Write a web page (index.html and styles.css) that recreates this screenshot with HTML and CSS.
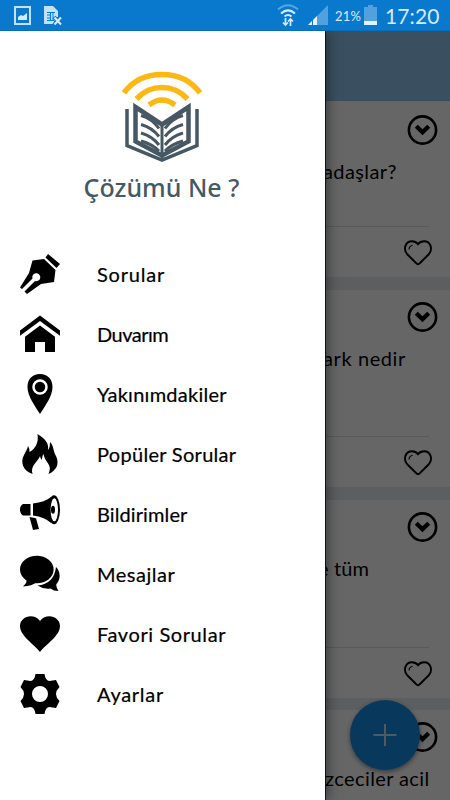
FILE: index.html
```html
<!DOCTYPE html>
<html lang="tr">
<head>
<meta charset="utf-8">
<meta name="viewport" content="width=device-width">
<title>Çözümü Ne ?</title>
<link rel="stylesheet" href="styles.css">
</head>
<body>
<svg width="0" height="0" class="defs">
  <symbol id="more" viewBox="0 0 30 30"><circle cx="15" cy="15" r="13.600" fill="none" stroke="#000" stroke-width="2.600"/><path d="M7.300 12.700 10.300 9.700 15 14.300 19.700 9.700l3 3-7.700 7.600z"/></symbol>
  <symbol id="like" viewBox="0 0 28 26"><path d="M14 24.2Q13.2 24.2 12 23L3 14C-.8 9.500 1 1.200 8 1.200c3 0 4.500 1 6 2.900 1.500-1.900 3-2.900 6-2.900 7 0 8.800 8.300 5 12.800l-9 9q-1.200 1.200-2 1.200z" fill="none" stroke="#000" stroke-width="1.900"/><path d="M5 9.500Q5 6 8.600 5.200" fill="none" stroke="#000" stroke-width="1.100"/></symbol>
</svg>
<header class="status">
  <svg class="picture" width="17" height="19" viewBox="0 0 17 19"><path d="M1 1h15v17H1z" fill="none" stroke="#c4e0f7" stroke-width="2"/><path d="M4 14V11l3-2 2 1 4-3v7z" fill="#d6ebfb"/></svg>
  <svg class="sim" width="18" height="20" viewBox="0 0 18 20"><path d="M0 0h9l5 5v6h-3V6H3v9h7v3H0z" fill="#c4e0f7"/><path d="M3 6h8v9H3z" fill="#c4e0f7"/><path d="M3 6.500h8M3 9h3M3 12h3M3 14.500h7M6.500 6v9M9 6v9" stroke="#0879cd" fill="none"/><path d="m10 11 7 8m0-8-7 8" stroke="#0879cd" stroke-width="4"/><path d="m10.500 11.500 6.500 7m0-7-6.500 7" stroke="#d6ebfb" stroke-width="2"/></svg>
  <svg class="wifi" width="22" height="23" viewBox="0 0 22 23"><g fill="none" stroke-width="2"><path d="M1 5.500Q11-3 21 5.500" stroke="#58a6df"/><path d="M4 9.500Q11 3.300 18 9.500M7.500 12.500q3.500-3 7 0" stroke="#d6ebfb"/><path d="M8.500 14v7M6 18.500 8.500 21 11 18.500M13.500 22v-7M11 17.500l2.500-2.500 2.500 2.500" stroke="#d6ebfb" stroke-width="1.700"/></g></svg>
  <svg class="signal" width="20" height="20" viewBox="0 0 20 20"><path d="M0 20 20 0v20z" fill="#50a1dd"/><path d="M0 20 9 11v9z" fill="#e3f2fd"/><path d="M4.500 14v6" stroke="#0879cd"/></svg>
  <span class="percent">21%</span>
  <svg class="battery" width="13" height="20" viewBox="0 0 13 20"><path d="M0 2h4V0h5v2h4v18H0z" fill="#50a1dd"/><path d="M0 16h13v4H0z" fill="#e3f2fd"/></svg>
  <span class="clock">17:20</span>
</header>
<main class="stage">
  <section class="feed">
    <div class="toolbar"></div>
    <article class="card first">
      <svg class="more"><use href="#more"/></svg>
      <p class="question q1">adaşlar?</p>
      <footer><svg class="like"><use href="#like"/></svg></footer>
    </article>
    <article class="card">
      <svg class="more"><use href="#more"/></svg>
      <p class="question q2">ark nedir</p>
      <footer><svg class="like"><use href="#like"/></svg></footer>
    </article>
    <article class="card third">
      <svg class="more"><use href="#more"/></svg>
      <p class="question q3">e tüm</p>
      <footer><svg class="like"><use href="#like"/></svg></footer>
    </article>
    <article class="card">
      <svg class="more"><use href="#more"/></svg>
      <p class="question q4">zceciler acil</p>
    </article>
    <div class="fab"><svg width="24" height="24" viewBox="0 0 24 24"><path d="M12 1v22M.5 12h23" stroke-width="2"/></svg></div>
  </section>
  <div class="scrim"></div>
  <nav class="drawer">
    <div class="brand">
      <svg width="80" height="93" viewBox="0 0 80 93">
        <g fill="none" stroke="#fdb813" stroke-width="5.500"><path d="M2 22C12 8 25 3.500 40 3.500S68 8 78 22"/><path d="M14.500 28C22 20 29 16.500 40 16.500S58 20 65.500 28"/><path d="M27 34q13-10 26 0"/></g>
        <g fill="none" stroke="#475863"><path d="M5 38v36.500L40 89 75 74.500V38" stroke-width="3.500"/><path d="M13.500 36v34.500L40 84.500 66.500 70.500V36L40 53.500z" stroke-width="4.500"/><path d="M40 53v34" stroke-width="3"/><path d="M19 44.500q11 3 18 13M19 53.500q11 3 18 12M19 62q11 3 18 12M19 70q11 3 18 10M61 44.500q-11 3-18 13M61 53.500q-11 3-18 12M61 62q-11 3-18 12M61 70q-11 3-18 10" stroke-width="3"/></g>
      </svg>
      <h1>Çözümü Ne ?</h1>
    </div>
    <ul class="menu">
      <li><svg viewBox="0 0 40 40"><path d="m28 0 12 10-3.500 4L25.500 3.500z"/><path d="M12.500 6.500 24 5l11.500 11-1.500 12-13 2L7 40l-2.500-2.500L15 27a4 4 0 1 0-2.500-2.500L2 35l-2-1.500L9 19z"/></svg><span class="t1">Sorular</span></li>
      <li><svg viewBox="0 0 40 40"><path d="M20 1.500 40 16.500v5.300L20 7 0 21.800v-5.300z"/><path d="m20 11.500 15 11.300V38H25V28H15v10H5V22.800z"/></svg><span class="t2">Duvarım</span></li>
      <li><svg viewBox="0 0 40 40"><path d="M20 0C12 0 7.500 5.500 7.500 13 7.500 22 15 32 20 40c5-8 12.500-18 12.500-27C32.500 5.500 28 0 20 0z"/><circle cx="20" cy="13" r="6.500" fill="none" stroke="#fff" stroke-width="2.500"/></svg><span class="t3">Yakınımdakiler</span></li>
      <li><svg viewBox="0 0 40 40"><path d="M17.500 0C26 5 29 10 28 16q2-2 2-8c4 4 3 9 6 14 4 8 0 15-7.500 18 4.500-10-3-10-5-20-1 1-1.500 4-1.500 6q-2-2-2-4c-2 6-10 9-7.500 18C3 37 0 28 4 21c2-4 3-5 4-9q2 3 1.500 6C15 15 19 9 17.500 0z"/></svg><span class="t4">Popüler Sorular</span></li>
      <li><svg viewBox="0 0 40 40"><path d="M3 10h7.500v11.500H3q-3-2-3-6t3-5.500zM13 9.500Q25 8 31 3v26Q25 23 13 21.500zM9.500 23l6.500 1.300 3 10.700-6 1z"/><ellipse cx="34" cy="15.800" rx="6" ry="14.500"/><ellipse cx="34.300" cy="15.800" rx="3.700" ry="11.500" fill="#fff"/><ellipse cx="33" cy="15.800" rx="2" ry="4"/></svg><span class="t5">Bildirimler</span></li>
      <li><svg viewBox="0 0 40 40"><path d="M36 13c4 4 5.500 11 .5 17q-1 2 2 7-5 0-8-2.500-7 1-13-3Q34 30 36 13z"/><ellipse cx="16.800" cy="15.500" rx="16.800" ry="13.700"/><path d="m6 25 11 3q-5 4-14 4.500Q8 28 6 25z"/></svg><span class="t6">Mesajlar</span></li>
      <li><svg viewBox="0 0 40 40"><path d="M20 38C14 30 0 22 0 12 0 3 13-2 20 7c7-9 20-4 20 5 0 10-14 18-20 26z"/></svg><span class="t7">Favori Sorular</span></li>
      <li><svg viewBox="0 0 40 40"><path fill-rule="evenodd" d="M15.500 0h9q1 7 5 7l6.500-1 3.500 7q-7 7 0 14L36 34l-6.500-1q-4 0-5 7h-9q-1-7-5-7L4 34 .5 27q7-7 0-14L4 6l6.500 1q4 0 5-7zM20 12a8 8 0 1 0 0 16 8 8 0 0 0 0-16z"/></svg><span class="t8">Ayarlar</span></li>
    </ul>
  </nav>
</main>
</body>
</html>
```

FILE: styles.css
```css
* { box-sizing: border-box; }
body {
  margin: 0;
  height: 800px;
  display: flex;
  flex-direction: column;
  overflow: hidden;
  font-family: Lato, "Open Sans", sans-serif;
  color: #000;
}
svg { display: block; flex: none; }
.defs { position: absolute; }
.status {
  height: 31px;
  flex: none;
  display: flex;
  align-items: flex-start;
  padding: 0 10px 0 14px;
  background: #0879cd;
  border-bottom: 1px solid #066ebd;
  color: #d6ebfb;
  white-space: nowrap;
}
.picture { margin-top: 6px; }
.sim { margin: 6px 0 0 13px; }
.wifi { margin: 4px 0 0 215px; }
.signal { margin: 5px 0 0 9px; }
.percent { width: 26px; margin: 8px 0 0 7px; font-size: 13px; line-height: 16px; letter-spacing: .2px; }
.battery { margin: 5px 0 0 3px; }
.clock { margin: 3px 0 0 8px; font-size: 21px; line-height: 25px; letter-spacing: .1px; }
.stage { position: relative; flex: 1; overflow: hidden; }
.feed {
  height: 100%;
  display: flex;
  flex-direction: column;
  background: #e5ecf1;
}
.toolbar { height: 70px; flex: none; background: #92c9f0; border-bottom: 1px solid #8fc2e8; }
.card {
  height: 197px;
  flex: none;
  margin-bottom: 13px;
  padding: 12px 12px 0 20px;
  display: flex;
  flex-direction: column;
  background: #fff;
}
.card.first { height: 176px; padding-top: 14px; }
.card.third { height: 198px; margin-bottom: 12px; }
.more { width: 31px; height: 30px; align-self: flex-end; }
.question { margin: 13px 0 0 303px; font-size: 20px; line-height: 26px; white-space: nowrap; }
.q1 { letter-spacing: .4px; }
.q2 { letter-spacing: .6px; }
.q3 { margin-left: 298px; letter-spacing: .1px; }
.q4 { margin-left: 305px; letter-spacing: .4px; }
.card footer {
  height: 51px;
  margin: auto 9px 0 0;
  padding: 13px 0 0;
  border-top: 1px solid #d9e0e4;
}
.like { width: 28px; height: 26px; margin: 0 -3px 0 auto; }
.fab {
  position: absolute;
  left: 350px;
  top: 669px;
  width: 70px;
  height: 70px;
  border-radius: 50%;
  display: grid;
  place-items: center;
  background: #1590e8;
  box-shadow: 0 2px 5px rgba(0, 0, 0, .45);
}
.fab path { stroke: #fff; opacity: .75; }
.scrim { position: absolute; inset: 0; background: rgba(0, 0, 0, .6); }
.drawer {
  position: absolute;
  top: 0;
  bottom: 0;
  left: 0;
  width: 325px;
  background: #fff;
  box-shadow: 1px 0 0 #0c1318, 2px 0 12px rgba(0, 0, 0, .5);
}
.brand { height: 213px; padding: 40px 2px 0 0; display: flex; flex-direction: column; align-items: center; }
.brand h1 {
  margin: 7px 0 0;
  font: 500 25px/32px "Noto Sans", sans-serif;
  color: #475863;
  letter-spacing: 0;
  white-space: nowrap;
}
.menu { list-style: none; margin: 0; padding: 0 0 0 20px; }
.menu li { height: 60px; display: flex; align-items: center; gap: 37px; font-size: 20px; }
.menu svg { width: 40px; height: 40px; }
.menu span { white-space: nowrap; -webkit-text-stroke: .2px #000; }
.t1 { letter-spacing: .8px; }
.t2 { letter-spacing: -.5px; }
.t3 { letter-spacing: .25px; }
.t4 { letter-spacing: .3px; }
.t5 { letter-spacing: .1px; }
.t6 { letter-spacing: .5px; }
.t7 { letter-spacing: .6px; }
.t8 { letter-spacing: .7px; }
```
